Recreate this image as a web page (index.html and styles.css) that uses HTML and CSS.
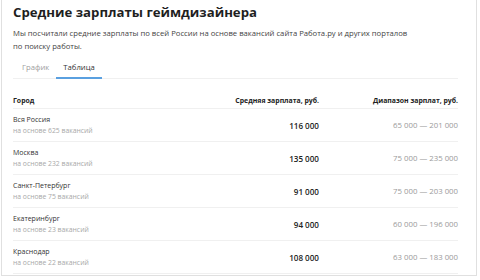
FILE: index.html
```html
<!DOCTYPE html>
<html lang="ru">
<head>
<meta charset="utf-8">
<link rel="stylesheet" href="styles.css">
</head>
<body>
<div class="card">
  <h1 class="title">Средние зарплаты геймдизайнера</h1>
  <p class="desc">Мы посчитали средние зарплаты по всей России на основе вакансий сайта Работа.ру и других порталов по поиску работы.</p>
  <div class="tabs">
    <span class="tab">График</span>
    <span class="tab active">Таблица</span>
  </div>
  <div class="table">
    <div class="row head">
      <div class="c-city">Город</div>
      <div class="c-avg">Средняя зарплата, руб.</div>
      <div class="c-range">Диапазон зарплат, руб.</div>
    </div>
    <div class="row">
      <div class="c-city"><div class="city">Вся Россия</div><div class="sub">на основе 625 вакансий</div></div>
      <div class="c-avg">116 000</div>
      <div class="c-range">65 000 — 201 000</div>
    </div>
    <div class="row">
      <div class="c-city"><div class="city">Москва</div><div class="sub">на основе 232 вакансий</div></div>
      <div class="c-avg">135 000</div>
      <div class="c-range">75 000 — 235 000</div>
    </div>
    <div class="row">
      <div class="c-city"><div class="city">Санкт-Петербург</div><div class="sub">на основе 75 вакансий</div></div>
      <div class="c-avg">91 000</div>
      <div class="c-range">75 000 — 203 000</div>
    </div>
    <div class="row">
      <div class="c-city"><div class="city">Екатеринбург</div><div class="sub">на основе 23 вакансий</div></div>
      <div class="c-avg">94 000</div>
      <div class="c-range">60 000 — 196 000</div>
    </div>
    <div class="row">
      <div class="c-city"><div class="city">Краснодар</div><div class="sub">на основе 22 вакансий</div></div>
      <div class="c-avg">108 000</div>
      <div class="c-range">63 000 — 183 000</div>
    </div>
  </div>
</div>
</body>
</html>
```

FILE: styles.css
```css
html, body {
  margin: 0;
  padding: 0;
  background: #fff;
}
body {
  font-family: "Open Sans", "Noto Sans", sans-serif;
  color: #333;
}
.card {
  width: 445px;
  margin-left: 1px;
  border: 1px solid #e0e0e0;
  border-top: none;
  padding: 3px 18px 1px 11px;
}
.title {
  margin: 0;
  font-size: 13.2px;
  line-height: 18px;
  font-weight: 700;
  color: #1f1f1f;
}
.desc {
  margin: 6px 0 0;
  font-size: 7.7px;
  line-height: 13px;
  color: #444;
  width: 402px;
}
.tabs {
  display: flex;
  margin-top: 8px;
  border-bottom: 1px solid #f0f0f0;
}
.tab {
  font-size: 7.7px;
  line-height: 12px;
  padding: 0 7px 4px 7px;
  color: #a0a0a0;
  border-bottom: 2px solid transparent;
  margin-bottom: -1px;
}
.tab:first-child {
  padding-left: 9px;
  padding-right: 7px;
}
.tab.active {
  color: #333;
  border-bottom-color: #5aa0e0;
}
.table {
  margin-top: 16px;
}
.row {
  display: grid;
  grid-template-columns: 1fr 140px 139px;
  align-items: center;
  height: 32px;
  border-bottom: 1px solid #f0f0f0;
}
.row.head {
  height: 13px;
  align-items: start;
  line-height: 11px;
  font-size: 6.9px;
  font-weight: 700;
  color: #222;
}
.c-avg, .c-range {
  text-align: right;
}
.city {
  font-size: 7px;
  line-height: 11px;
  color: #333;
}
.sub {
  font-size: 6.8px;
  line-height: 11px;
  color: #a8a8a8;
}
.row .c-avg {
  font-size: 8.1px;
  font-weight: 600;
  color: #222;
}
.row.head .c-avg {
  font-size: 6.9px;
  font-weight: 700;
}
.row .c-range {
  font-size: 7.8px;
  font-weight: 400;
  color: #9a9a9a;
}
.row.head .c-range {
  font-size: 6.9px;
  font-weight: 700;
  color: #222;
}
```
